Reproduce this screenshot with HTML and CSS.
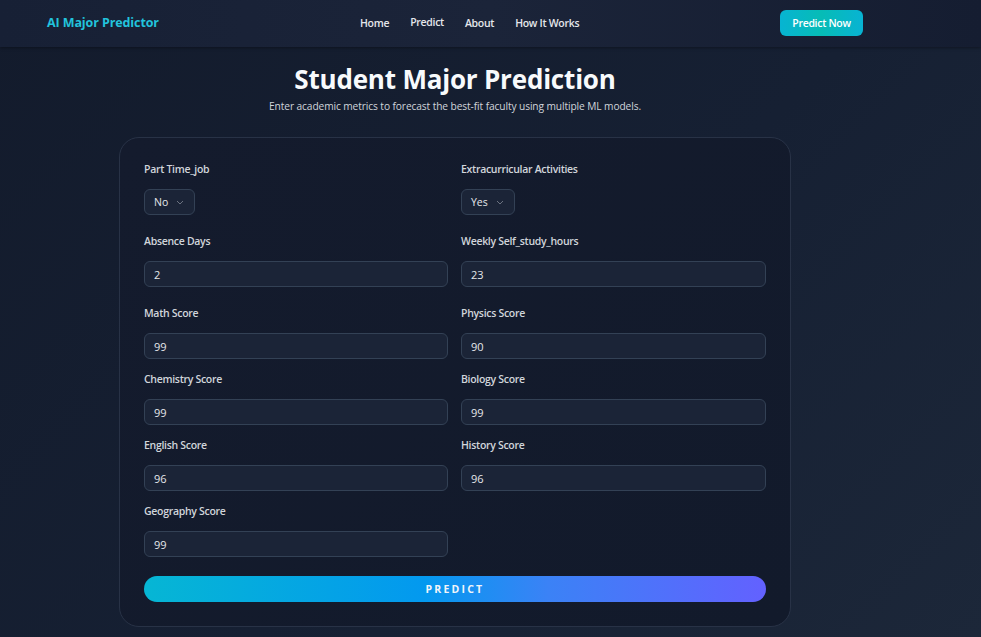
FILE: index.html
```html
<!DOCTYPE html>
<html lang="en">
<head>
<meta charset="utf-8">
<title>AI Major Predictor</title>
<link rel="stylesheet" href="styles.css">
</head>
<body>
<header class="navbar">
  <div class="brand">AI Major Predictor</div>
  <nav class="links">
    <a href="#">Home</a>
    <a href="#" class="active">Predict</a>
    <a href="#">About</a>
    <a href="#">How It Works</a>
  </nav>
  <a href="#" class="cta">Predict Now</a>
</header>
<main class="page">
  <h1 class="title">Student Major Prediction</h1>
  <p class="subtitle">Enter academic metrics to forecast the best-fit faculty using multiple ML models.</p>
  <form class="card">
    <div class="grid first">
      <div class="field">
        <label>Part Time_job</label>
        <div class="select">No <svg width="8" height="5" viewBox="0 0 8 5"><path d="M1 1l3 3 3-3" fill="none" stroke="#6b7280" stroke-width="1"/></svg></div>
      </div>
      <div class="field">
        <label>Extracurricular Activities</label>
        <div class="select">Yes <svg width="8" height="5" viewBox="0 0 8 5"><path d="M1 1l3 3 3-3" fill="none" stroke="#6b7280" stroke-width="1"/></svg></div>
      </div>
      <div class="field">
        <label>Absence Days</label>
        <div class="input">2</div>
      </div>
      <div class="field">
        <label>Weekly Self_study_hours</label>
        <div class="input">23</div>
      </div>
    </div>
    <div class="grid second">
      <div class="field">
        <label>Math Score</label>
        <div class="input">99</div>
      </div>
      <div class="field">
        <label>Physics Score</label>
        <div class="input">90</div>
      </div>
      <div class="field">
        <label>Chemistry Score</label>
        <div class="input">99</div>
      </div>
      <div class="field">
        <label>Biology Score</label>
        <div class="input">99</div>
      </div>
      <div class="field">
        <label>English Score</label>
        <div class="input">96</div>
      </div>
      <div class="field">
        <label>History Score</label>
        <div class="input">96</div>
      </div>
      <div class="field">
        <label>Geography Score</label>
        <div class="input">99</div>
      </div>
    </div>
    <button type="button" class="predict">PREDICT</button>
  </form>
</main>
</body>
</html>
```
FILE: styles.css
```css
* { box-sizing: border-box; }
html, body { margin: 0; height: 100%; }
body {
  font-family: "Open Sans", "Noto Sans", sans-serif;
  color: #e5e7eb;
  background: linear-gradient(135deg, #131b2c 0%, #162033 55%, #1c2739 100%);
  overflow: hidden;
}
.navbar {
  height: 47px;
  display: flex;
  align-items: center;
  padding: 0 118px 0 47px;
  background: linear-gradient(90deg, #172035 0%, #1b2439 50%, #151d31 100%);
  box-shadow: 0 1px 3px rgba(0,0,0,0.35);
}
.brand {
  color: #22c3dc;
  font-weight: 700;
  font-size: 12.5px;
  letter-spacing: -0.1px;
  width: 313px;
  position: relative;
  top: -1px;
}
.links {
  display: flex;
  gap: 21px;
  flex: 1;
  position: relative;
  top: -1px;
}
.links a {
  color: #e5e7eb;
  text-decoration: none;
  font-size: 10.5px;
  font-weight: 600;
  letter-spacing: -0.3px;
}
.links a.active { position: relative; top: -1px; }
.cta {
  background: linear-gradient(90deg, #07b4d2 0%, #06bcb6 50%, #08b3d3 100%);
  color: #fff;
  text-decoration: none;
  font-size: 10.5px;
  font-weight: 600;
  letter-spacing: -0.3px;
  height: 26px;
  width: 83px;
  border-radius: 6px;
  display: flex;
  align-items: center;
  justify-content: center;
  position: relative;
  top: -1px;
}
.page {
  display: flex;
  flex-direction: column;
  align-items: center;
  padding: 16px 71px 0 0;
}
.title {
  margin: 0;
  font-size: 26px;
  font-weight: 700;
  color: #f8fafc;
  line-height: 32px;
  letter-spacing: -0.2px;
}
.subtitle {
  margin: 4px 0 0;
  font-size: 10.2px;
  color: #d1d5db;
  line-height: 14px;
  letter-spacing: -0.1px;
}
.card {
  margin-top: 24px;
  width: 672px;
  background: linear-gradient(135deg, #141b2d 0%, #121a2b 100%);
  border: 1px solid #283246;
  border-radius: 20px;
  padding: 23px 24px 24px;
}
.grid {
  display: grid;
  grid-template-columns: 304px 305px;
  column-gap: 13px;
}
.grid.first { row-gap: 18px; margin-bottom: 18px; }
.grid.second { row-gap: 12px; }
.field { display: flex; flex-direction: column; }
.field label {
  font-size: 10.5px;
  font-weight: 600;
  color: #d1d5db;
  line-height: 16px;
  height: 16px;
  margin-bottom: 12px;
  letter-spacing: -0.3px;
}
.select {
  align-self: flex-start;
  height: 26px;
  padding: 0 10px 0 9px;
  border: 1px solid #334155;
  border-radius: 6px;
  background: #1b2437;
  display: flex;
  align-items: center;
  gap: 8px;
  font-size: 10.5px;
  color: #e5e7eb;
}
.input {
  height: 26px;
  border: 1px solid #334155;
  border-radius: 6px;
  background: #1b2437;
  display: flex;
  align-items: center;
  padding: 0 9px;
  font-size: 11px;
  color: #e5e7eb;
}
.predict {
  margin-top: 19px;
  width: 100%;
  height: 26px;
  border: none;
  border-radius: 13px;
  background: linear-gradient(90deg, #06b6d4 0%, #0399ef 45%, #3b82f6 65%, #6361ff 100%);
  color: #f1f5f9;
  font-family: inherit;
  font-size: 10.5px;
  font-weight: 700;
  letter-spacing: 2.2px;
  cursor: pointer;
}
```
